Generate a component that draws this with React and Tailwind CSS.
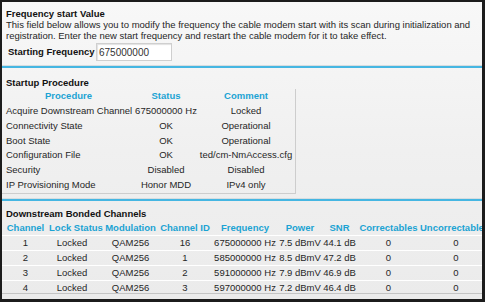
import React from "react";

const procRows = [
  ["Acquire Downstream Channel", "675000000 Hz", "Locked"],
  ["Connectivity State", "OK", "Operational"],
  ["Boot State", "OK", "Operational"],
  ["Configuration File", "OK", "ted/cm-NmAccess.cfg"],
  ["Security", "Disabled", "Disabled"],
  ["IP Provisioning Mode", "Honor MDD", "IPv4 only"],
];

const chRows = [
  ["1", "Locked", "QAM256", "16", "675000000 Hz", "7.5 dBmV", "44.1 dB", "0", "0"],
  ["2", "Locked", "QAM256", "1", "585000000 Hz", "8.5 dBmV", "47.2 dB", "0", "0"],
  ["3", "Locked", "QAM256", "2", "591000000 Hz", "7.9 dBmV", "46.9 dB", "0", "0"],
  ["4", "Locked", "QAM256", "3", "597000000 Hz", "7.2 dBmV", "46.4 dB", "0", "0"],
];

const chHead = ["Channel", "Lock Status", "Modulation", "Channel ID", "Frequency", "Power", "SNR", "Correctables", "Uncorrectable"];

const gridCols = "grid grid-cols-[47px_54px_55px_54px_66px_44px_35px_63px_62px] w-[480px]";

function Divider() {
  return (
    <div className="w-full">
      <div className="h-px bg-[#d6dde0]" />
      <div className="h-[2px] bg-[#45b6e2]" />
    </div>
  );
}

export default function App() {
  return (
    <div className="w-[490px] h-[302px] bg-white" style={{ fontFamily: '"Liberation Sans", Arial, sans-serif' }}>
      <div className="w-[485px] h-[302px] border-t-2 border-l-2 border-r-[3px] border-b-[3px] border-[#1c1c1c] overflow-hidden bg-gradient-to-b from-[#f8f8f8] via-[#f0f0f0] to-[#ebebeb] text-[9.5px] text-[#262626]">
        {/* Section 1 */}
        <div className="px-[4px] pt-[5px]">
          <div className="h-[13px] leading-[13px] font-bold text-[#111]">Frequency start Value</div>
          <div className="leading-[10.5px]">
            This field below allows you to modify the frequency the cable modem start with its scan during initialization and
            <br />
            registration. Enter the new start frequency and restart the cable modem for it to take effect.
          </div>
          <div className="mt-[2px] h-[18px] flex items-center">
            <div className="pl-[2px] w-[90px] font-bold text-[#111]">Starting Frequency</div>
            <div className="w-[76px] h-[18px] bg-white border border-[#cfcfcf] shadow-[inset_1px_1px_1px_rgba(0,0,0,0.12)] flex items-center pl-[2px] text-[10px] text-[#333]">
              675000000
            </div>
          </div>
        </div>
        <div className="mt-[4px]">
          <Divider />
        </div>

        {/* Section 2 */}
        <div className="pt-[9px]">
          <div className="px-[4px] h-[12px] leading-[12px] font-bold text-[#111]">Startup Procedure</div>
          <div className="w-[294px] border-r border-b border-[#cdcdcd] pb-[1px]">
            <div className="grid grid-cols-[133px_62px_98px] h-[15px] items-center font-bold text-[#1ba3d3]">
              <div className="text-center">Procedure</div>
              <div className="text-center">Status</div>
              <div className="text-center">Comment</div>
            </div>
            {procRows.map((r, i) => (
              <div key={i} className="grid grid-cols-[133px_62px_98px] h-[14.7px] items-center whitespace-nowrap">
                <div className="pl-[4px]">{r[0]}</div>
                <div className="text-center">{r[1]}</div>
                <div className="text-center">{r[2]}</div>
              </div>
            ))}
          </div>
        </div>
        <div className="mt-[4px]">
          <Divider />
        </div>

        {/* Section 3 */}
        <div className="pt-[7px]">
          <div className="px-[4px] h-[12px] leading-[12px] font-bold text-[#111]">Downstream Bonded Channels</div>
          <div className={gridCols + " h-[15px] items-center font-bold text-[#1ba3d3] whitespace-nowrap"}>
            {chHead.map((h, i) => (
              <div key={i} className="text-center">{h}</div>
            ))}
          </div>
          {chRows.map((r, i) => (
            <div
              key={i}
              className={
                gridCols +
                " h-[14.8px] items-center whitespace-nowrap border-t border-white" +
                (i === 3 ? " border-b border-b-[#c4c4c4]" : "")
              }
            >
              {r.map((c, j) => (
                <div key={j} className={j === 1 ? "text-center pr-[8px]" : j === 8 ? "text-center pl-[10px]" : "text-center"}>{c}</div>
              ))}
            </div>
          ))}
        </div>
      </div>
    </div>
  );
}
